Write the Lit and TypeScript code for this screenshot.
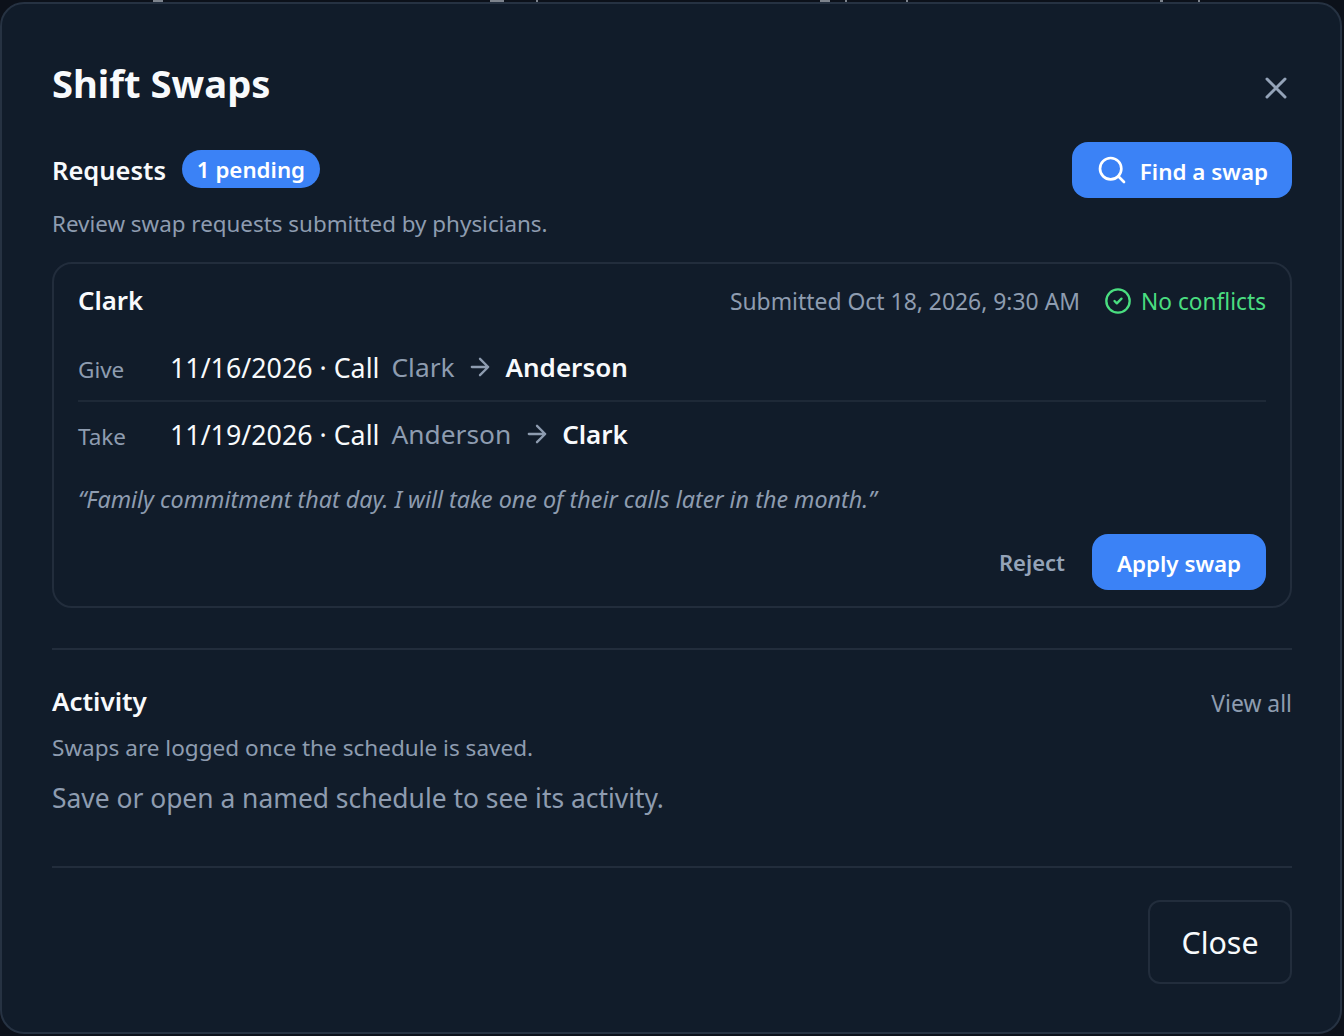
import { LitElement, html, css } from "lit";
import { customElement } from "lit/decorators.js";

@customElement("app-root")
export class AppRoot extends LitElement {
  static styles = css`
    :host { display: block; position: relative; width: 1344px; height: 1036px; background: #0c111a; overflow: hidden; font-family: "Noto Sans", "Open Sans", sans-serif; }
    * { box-sizing: border-box; }
    .bit { position: absolute; top: 0; height: 2px; background: #7d838c; }
    .panel { position: relative; height: 1032px; width: 1342px; margin-top: 2px; background: #111c2a; border: 2px solid #263242; border-radius: 24px; padding: 0 48px 0 50px; display: flex; flex-direction: column; }
    .head { display: flex; justify-content: space-between; align-items: flex-start; height: 138px; flex: none; }
    h1 { margin: 55px 0 0; font-size: 38.2px; font-weight: 700; color: #f8fafc; line-height: 48px; }
    .x { color: #94a3b8; display: block; margin: 66px -2px 0 0; }
    .req { display: flex; justify-content: space-between; align-items: center; height: 56px; flex: none; }
    .req-l { display: flex; align-items: center; gap: 16px; }
    h2 { margin: 0; font-size: 25.5px; font-weight: 600; color: #f8fafc; }
    .badge { background: #3b82f6; color: #fff; border-radius: 19px; height: 38px; width: 138px; margin-bottom: 2px; font-size: 22.3px; font-weight: 600; display: flex; align-items: center; justify-content: center; }
    .btn { background: #3b82f6; color: #fff; border-radius: 16px; height: 56px; display: flex; align-items: center; font-size: 22.4px; font-weight: 600; padding: 0 24px; gap: 12px; }
    .btn span { padding-top: 2px; }
    .sub { color: #8e9cb0; font-size: 22.4px; margin-top: 8px; line-height: 36px; }
    .card { margin-top: 20px; height: 346px; flex: none; border: 2px solid #222d3c; border-radius: 20px; padding: 0 24px; display: flex; flex-direction: column; }
    .card-h { display: flex; justify-content: space-between; align-items: center; height: 70px; padding-top: 4px; flex: none; }
    .who { font-size: 25.8px; font-weight: 600; color: #f8fafc; margin-top: -2px; }
    .meta { display: flex; align-items: center; color: #8e9cb0; font-size: 22.9px; }
    .ok { display: flex; align-items: center; gap: 9px; color: #4ade80; margin-left: 24px; font-size: 22.7px; }
    .row { display: flex; align-items: center; height: 66px; flex: none; }
    .row + .row { border-top: 2px solid #1e2937; }
    .lab { width: 92px; color: #8e9cb0; font-size: 22.5px; padding-top: 4px; }
    .date { color: #f8fafc; font-size: 26.8px; }
    .from { color: #8e9cb0; font-size: 26.3px; margin-left: 12px; }
    .arrow { color: #8e9cb0; margin: 0 11.5px; display: block; }
    .to { color: #f8fafc; font-size: 26px; font-weight: 600; }
    .note { color: #8e9cb0; font-size: 23.3px; font-style: italic; margin-top: 15px; line-height: 36px; }
    .acts { display: flex; justify-content: flex-end; align-items: center; gap: 27px; margin-top: 17px; }
    .rej { color: #94a3b8; font-size: 22px; font-weight: 600; }
    .apply { width: 174px; padding: 0; justify-content: center; }
    .div { height: 2px; background: #222d3c; flex: none; margin-top: 40px; }
    .div.low { margin-top: 48px; }
    .act-h { display: flex; justify-content: space-between; align-items: center; margin-top: 29px; height: 44px; flex: none; }
    .act-h h2 { font-size: 26px; }
    .link { color: #8e9cb0; font-size: 22.9px; margin-top: 4px; }
    .sub2 { color: #8e9cb0; font-size: 22.55px; line-height: 36px; margin-top: 7px; }
    .empty { color: #8e9cb0; font-size: 26.4px; line-height: 40px; margin-top: 12px; }
    .foot { display: flex; justify-content: flex-end; margin-top: 32px; }
    .close { width: 144px; height: 84px; border: 2px solid #222d3c; border-radius: 12px; color: #f8fafc; font-size: 30.4px; display: flex; align-items: center; justify-content: center; }
  `;

  private bits = [[153, 10], [490, 14], [536, 2], [820, 10], [845, 2], [906, 2], [1160, 3], [1198, 2]];

  private arrow() {
    return html`<svg class="arrow" width="28" height="28" viewBox="0 0 24 24" fill="none" stroke="currentColor" stroke-width="2" stroke-linecap="round" stroke-linejoin="round"><path d="M5 12h14M12 5l7 7-7 7"/></svg>`;
  }

  render() {
    return html`${this.bits.map(([x, w]) => html`<i class="bit" style="left:${x}px;width:${w}px"></i>`)}
    <div class="panel">
      <div class="head"><h1>Shift Swaps</h1>
        <svg class="x" width="36" height="36" viewBox="0 0 24 24" fill="none" stroke="currentColor" stroke-width="2" stroke-linecap="round"><path d="M18 6 6 18M6 6l12 12"/></svg>
      </div>
      <div class="req">
        <div class="req-l"><h2>Requests</h2><span class="badge">1 pending</span></div>
        <div class="btn"><svg width="32" height="32" viewBox="0 0 24 24" fill="none" stroke="currentColor" stroke-width="2" stroke-linecap="round"><circle cx="11" cy="11" r="8"/><path d="m21 21-4.3-4.3"/></svg><span>Find a swap</span></div>
      </div>
      <div class="sub">Review swap requests submitted by physicians.</div>
      <div class="card">
        <div class="card-h"><span class="who">Clark</span>
          <div class="meta"><span>Submitted Oct 18, 2026, 9:30 AM</span>
            <span class="ok"><svg width="28" height="28" viewBox="0 0 24 24" fill="none" stroke="currentColor" stroke-width="2" stroke-linecap="round" stroke-linejoin="round"><circle cx="12" cy="12" r="10"/><path d="m9 12 2 2 4-4"/></svg>No conflicts</span></div>
        </div>
        <div class="row"><span class="lab">Give</span><span class="date">11/16/2026 · Call</span><span class="from">Clark</span>${this.arrow()}<span class="to">Anderson</span></div>
        <div class="row"><span class="lab">Take</span><span class="date">11/19/2026 · Call</span><span class="from">Anderson</span>${this.arrow()}<span class="to">Clark</span></div>
        <div class="note">“Family commitment that day. I will take one of their calls later in the month.”</div>
        <div class="acts"><span class="rej">Reject</span><div class="btn apply"><span>Apply swap</span></div></div>
      </div>
      <div class="div"></div>
      <div class="act-h"><h2>Activity</h2><span class="link">View all</span></div>
      <div class="sub2">Swaps are logged once the schedule is saved.</div>
      <div class="empty">Save or open a named schedule to see its activity.</div>
      <div class="div low"></div>
      <div class="foot"><div class="close">Close</div></div>
    </div>`;
  }
}
